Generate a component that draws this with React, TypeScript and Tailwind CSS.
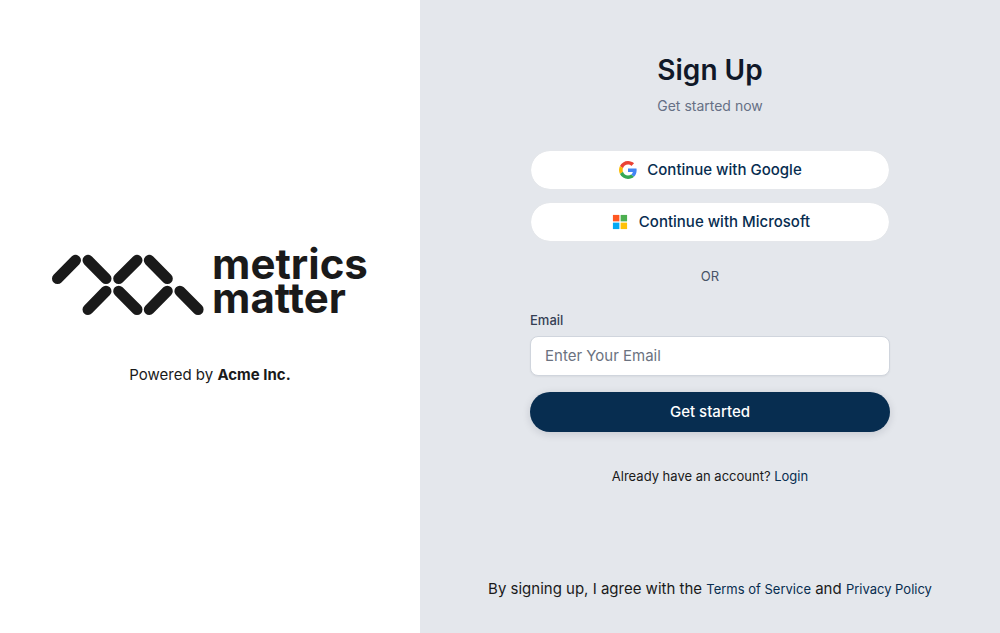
import React from "react";

function BrandMark() {
  return (
    <svg
      viewBox="0 0 152 61"
      className="h-[61px] w-[152px] shrink-0"
      fill="none"
      stroke="#1a1a1a"
      strokeWidth="11"
      strokeLinecap="round"
      aria-hidden="true"
    >
      <path d="M5.5 24.6 23.5 6.3M36 6.3 54 24.6M66.7 24.6 85 6.3M97.3 6.3 115.3 24.6" />
      <path d="M36 55.5 54 37.2M66.7 37.2 85 55.5M97.3 55.5 115.3 37.2M127.9 37.2 146.1 55.5" />
    </svg>
  );
}

function GoogleIcon() {
  return (
    <svg viewBox="0 0 48 48" className="size-5" aria-hidden="true">
      <g transform="translate(2.4 2.4) scale(.9)">
        <path fill="#EA4335" d="M24 9.5c3.54 0 6.71 1.22 9.21 3.6l6.85-6.85C35.9 2.38 30.47 0 24 0 14.62 0 6.51 5.38 2.56 13.22l7.98 6.19C12.43 13.72 17.74 9.5 24 9.5z" />
        <path fill="#4285F4" d="M46.98 24.55c0-1.57-.15-3.09-.38-4.55H24v9.02h12.94c-.58 2.96-2.26 5.48-4.78 7.18l7.73 6c4.51-4.18 7.09-10.36 7.09-17.65z" />
        <path fill="#FBBC05" d="M10.53 28.59c-.48-1.45-.76-2.99-.76-4.59s.27-3.14.76-4.59l-7.98-6.19C.92 16.46 0 20.12 0 24c0 3.88.92 7.54 2.56 10.78l7.97-6.19z" />
        <path fill="#34A853" d="M24 48c6.48 0 11.93-2.13 15.89-5.81l-7.73-6c-2.15 1.45-4.92 2.3-8.16 2.3-6.26 0-11.57-4.22-13.47-9.91l-7.98 6.19C6.51 42.62 14.62 48 24 48z" />
      </g>
    </svg>
  );
}

function MicrosoftIcon() {
  return (
    <svg viewBox="0 0 48 48" className="size-5" aria-hidden="true">
      <path fill="#ff5722" d="M7 7h15.5v15.5H7z" />
      <path fill="#4caf50" d="M25.5 7H41v15.5H25.5z" />
      <path fill="#03a9f4" d="M7 25.5h15.5V41H7z" />
      <path fill="#ffc107" d="M25.5 25.5H41V41H25.5z" />
    </svg>
  );
}

function ProviderButton({ icon, children }: { icon: React.ReactNode; children: React.ReactNode }) {
  return (
    <button
      type="button"
      className="flex h-10 w-full items-center justify-center gap-[9px] rounded-full border border-gray-200 bg-white bg-clip-padding text-[15px] font-medium text-[#072d50]"
    >
      {icon}
      {children}
    </button>
  );
}

export default function App() {
  return (
    <div className="flex min-h-screen bg-white font-['Inter',sans-serif] text-[#1a1a1a]">
      <aside className="flex w-[42%] flex-col items-center justify-center gap-12">
        <div className="flex items-end gap-2">
          <BrandMark />
          <div className="text-[42px] leading-[34px] font-bold">
            <div>metrics</div>
            <div>matter</div>
          </div>
        </div>
        <p className="text-[15px] leading-6">
          Powered by <strong>Acme Inc.</strong>
        </p>
      </aside>

      <main className="flex flex-1 flex-col items-center justify-between bg-[#e4e7ec] px-8 pt-12 pb-8">
        <div className="flex w-full max-w-[360px] flex-col">
          <h1 className="text-center text-[28px] leading-11 font-semibold text-[#101828]">Sign Up</h1>
          <p className="mt-1 text-center text-sm leading-5 text-[#667085]">Get started now</p>

          <div className="mt-[34px] flex flex-col gap-3">
            <ProviderButton icon={<GoogleIcon />}>Continue with Google</ProviderButton>
            <ProviderButton icon={<MicrosoftIcon />}>Continue with Microsoft</ProviderButton>
          </div>

          <p className="my-6 text-center text-[13px] leading-5 text-[#475467]">OR</p>

          <form onSubmit={(event) => event.preventDefault()}>
            <label htmlFor="email" className="block text-[13px] leading-5 font-medium text-[#344054]">
              Email
            </label>
            <input
              id="email"
              type="email"
              placeholder="Enter Your Email"
              className="mt-1.5 block h-10 w-full rounded-lg border border-[#d0d5dd] bg-white px-3.5 pb-0.5 text-[15px] shadow-xs outline-none placeholder:text-[#6b7280]"
            />
            <button
              type="submit"
              className="mt-4 h-10 w-full rounded-full bg-[#072d50] text-[15px] font-medium text-white shadow-[0_2px_8px_rgba(16,24,40,0.14)]"
            >
              Get started
            </button>
          </form>

          <p className="mt-[34px] text-center text-[13px] leading-5">
            Already have an account?{" "}
            <a href="#login" className="text-[#072d50]">Login</a>
          </p>
        </div>

        <p className="text-center text-[15px] leading-6">
          By signing up, I agree with the{" "}
          <a href="#terms" className="text-[13px] text-[#072d50]">Terms of Service</a> and{" "}
          <a href="#privacy" className="text-[13px] text-[#072d50]">Privacy Policy</a>
        </p>
      </main>
    </div>
  );
}
